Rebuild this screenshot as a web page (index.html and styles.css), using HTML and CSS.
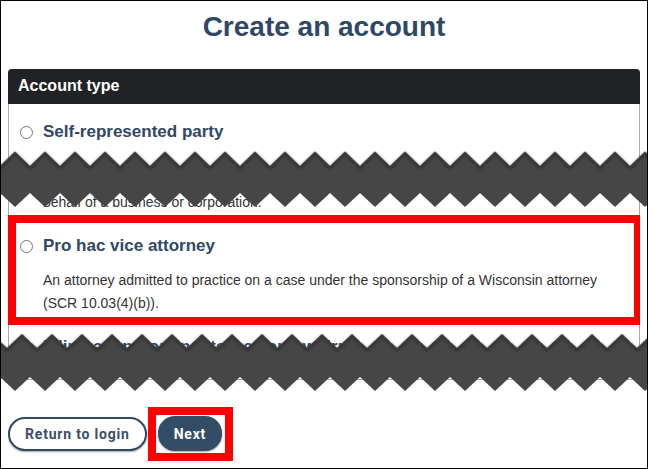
FILE: index.html
```html
<!DOCTYPE html>
<html lang="en">
<head>
<meta charset="utf-8">
<title>Create an account</title>
<link rel="stylesheet" href="styles.css">
</head>
<body>
  <h1 class="title">Create an account</h1>

  <section class="panel">
    <div class="panel-header">Account type</div>
    <div class="panel-body">
      <div class="option option--cut">
        <label class="option-head">
          <input class="radio" type="radio" name="type">
          <span class="option-label">Self-represented party</span>
        </label>
        <p class="option-desc">An individual who is not represented by an attorney, including a person who is acting on behalf of a business or corporation.</p>
      </div>
      <div class="option option--highlight">
        <label class="option-head">
          <input class="radio" type="radio" name="type">
          <span class="option-label">Pro hac vice attorney</span>
        </label>
        <p class="option-desc">An attorney admitted to practice on a case under the sponsorship of a Wisconsin attorney (SCR 10.03(4)(b)).</p>
      </div>
      <div class="option">
        <label class="option-head">
          <input class="radio" type="radio" name="type">
          <span class="option-label">Filing agent for an attorney or law firm</span>
        </label>
      </div>
    </div>
  </section>

  <div class="actions">
    <button class="btn btn--outline" type="button">Return to login</button>
    <span class="callout"><button class="btn btn--primary" type="button">Next</button></span>
  </div>

  <svg class="tear tear--a" width="648" height="57" viewBox="0 0 648 57" aria-hidden="true">
    <defs>
      <filter id="soft" x="-20%" y="-20%" width="140%" height="140%"><feGaussianBlur stdDeviation="0.9"/></filter>
      <pattern id="tearA" patternUnits="userSpaceOnUse" width="30" height="57">
        <polygon points="0,15 15,0.5 30,15 30,42 15,56 0,42" fill="#464646"/>
        <polyline points="0,17.5 15,3 30,17.5" fill="none" stroke="#363636" stroke-width="3" filter="url(#soft)"/>
      </pattern>
    </defs>
    <rect width="648" height="57" fill="url(#tearA)"/>
  </svg>

  <svg class="tear tear--b" width="648" height="59" viewBox="0 0 648 59" aria-hidden="true">
    <defs>
      <filter id="softB" x="-20%" y="-20%" width="140%" height="140%"><feGaussianBlur stdDeviation="0.9"/></filter>
      <pattern id="tearB" patternUnits="userSpaceOnUse" width="30" height="59">
        <polygon points="0,8.5 7,15 22,1 30,8.5 30,44 15,58 0,44" fill="#464646"/>
        <polyline points="0,11 7,17.5 22,3.5 30,11" fill="none" stroke="#363636" stroke-width="3" filter="url(#softB)"/>
      </pattern>
    </defs>
    <rect width="648" height="59" fill="url(#tearB)"/>
  </svg>

  <div class="frame" aria-hidden="true"></div>
</body>
</html>
```

FILE: styles.css
```css
* {
  box-sizing: border-box;
}

html {
  background: #fff;
}

body {
  margin: 8px;
  font-family: "Liberation Sans", Arial, sans-serif;
  color: #333;
}

.title {
  margin: 3px 0 26px;
  text-align: center;
  font-size: 28px;
  line-height: 32px;
  font-weight: 700;
  color: #2f4865;
}

.panel-header {
  height: 35px;
  display: flex;
  align-items: center;
  padding: 0 10px 1px;
  background: #212226;
  color: #fff;
  font-size: 16px;
  font-weight: 700;
  border-radius: 4px 4px 0 0;
}

.panel-body {
  border: 1px solid #a9a9a9;
  border-top: 0;
  padding-top: 18px;
}

.option {
  padding: 0 31px 22px 11px;
}

.option-head {
  display: flex;
  align-items: center;
  gap: 10px;
  height: 20px;
}

.radio {
  width: 13px;
  height: 13px;
  margin: 0;
  flex: none;
}

.option-label {
  font-size: 17px;
  line-height: 20px;
  font-weight: 700;
  color: #2f4865;
}

.option-desc {
  margin: 13px 0 0 23px;
  font-size: 14px;
  line-height: 23px;
  color: #333;
}

.option--cut .option-desc {
  margin-top: 26px;
}

.option--highlight {
  position: relative;
}

.option--highlight::after {
  content: "";
  position: absolute;
  top: -21px;
  left: -1px;
  right: -3px;
  bottom: 12px;
  border: 8px solid #f00;
  pointer-events: none;
}

.actions {
  display: flex;
  align-items: center;
  gap: 1px;
  margin-top: 27px;
}

.btn {
  height: 34px;
  padding: 0 15px;
  border-radius: 17px;
  border: 2px solid #2f4a66;
  font-family: Roboto, "Liberation Sans", sans-serif;
  font-size: 14px;
  font-weight: 700;
  letter-spacing: 0.8px;
  box-shadow: 0 1px 2px rgba(0, 0, 0, 0.35);
  cursor: pointer;
}

.btn--outline {
  background: #fff;
  color: #3a4f67;
}

.btn--primary {
  height: 35px;
  padding: 0 14px;
  background: #344d67;
  border-color: #344d67;
  color: #fff;
}

.callout {
  display: inline-flex;
  padding: 1px 3px 2px 2px;
  border: 8px solid #f00;
}

.tear {
  position: absolute;
  left: 0;
  display: block;
}

.tear--a {
  top: 151px;
}

.tear--b {
  top: 333px;
}

.frame {
  position: fixed;
  inset: 0;
  border: 1px solid #000;
  pointer-events: none;
}
```
